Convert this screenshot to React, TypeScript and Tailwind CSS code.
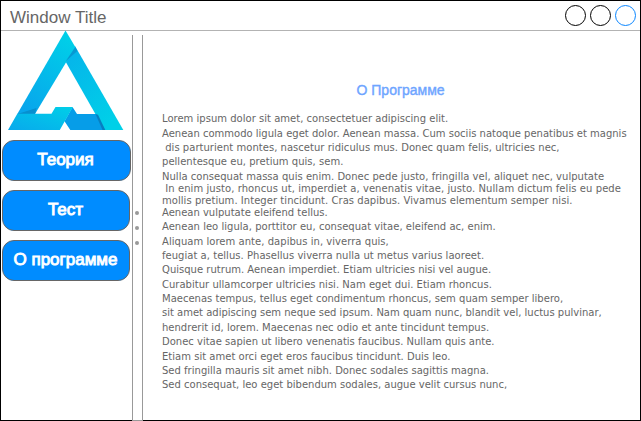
const lines: { text: string; row: string }[] = [
  { text: 'Lorem ipsum dolor sit amet, consectetuer adipiscing elit.', row: 'h-[15px] tracking-[0.015px]' },
  { text: 'Aenean commodo ligula eget dolor. Aenean massa. Cum sociis natoque penatibus et magnis', row: 'h-[15px]' },
  { text: '\u00a0dis parturient montes, nascetur ridiculus mus. Donec quam felis, ultricies nec,', row: 'h-[14px] tracking-[0.03px]' },
  { text: 'pellentesque eu, pretium quis, sem.', row: 'h-[14px] tracking-[0.03px]' },
  { text: 'Nulla consequat massa quis enim. Donec pede justo, fringilla vel, aliquet nec, vulputate', row: 'h-[15px] tracking-[0.02px]' },
  { text: '\u00a0In enim justo, rhoncus ut, imperdiet a, venenatis vitae, justo. Nullam dictum felis eu pede', row: 'h-[12px] tracking-[0.072px]' },
  { text: 'mollis pretium. Integer tincidunt. Cras dapibus. Vivamus elementum semper nisi.', row: 'h-[12px] tracking-[0.045px]' },
  { text: 'Aenean vulputate eleifend tellus.', row: 'h-[12px]' },
  { text: 'Aenean leo ligula, porttitor eu, consequat vitae, eleifend ac, enim.', row: 'h-[14px] tracking-[0.025px]' },
  { text: 'Aliquam lorem ante, dapibus in, viverra quis,', row: 'h-[15px] tracking-[0.04px]' },
  { text: 'feugiat a, tellus. Phasellus viverra nulla ut metus varius laoreet.', row: 'h-[14px] tracking-[0.03px]' },
  { text: 'Quisque rutrum. Aenean imperdiet. Etiam ultricies nisi vel augue.', row: 'h-[14px] tracking-[0.015px]' },
  { text: 'Curabitur ullamcorper ultricies nisi. Nam eget dui. Etiam rhoncus.', row: 'h-[15px] tracking-[0.015px]' },
  { text: 'Maecenas tempus, tellus eget condimentum rhoncus, sem quam semper libero,', row: 'h-[14px] tracking-[0.01px]' },
  { text: 'sit amet adipiscing sem neque sed ipsum. Nam quam nunc, blandit vel, luctus pulvinar,', row: 'h-[14px]' },
  { text: 'hendrerit id, lorem. Maecenas nec odio et ante tincidunt tempus.', row: 'h-[15px] tracking-[0.015px]' },
  { text: 'Donec vitae sapien ut libero venenatis faucibus. Nullam quis ante.', row: 'h-[14px]' },
  { text: 'Etiam sit amet orci eget eros faucibus tincidunt. Duis leo.', row: 'h-[15px] tracking-[0.02px]' },
  { text: 'Sed fringilla mauris sit amet nibh. Donec sodales sagittis magna.', row: 'h-[14px] tracking-[0.015px]' },
  { text: 'Sed consequat, leo eget bibendum sodales, augue velit cursus nunc,', row: 'h-[14px]' },
];

function Logo() {
  return (
    <svg className="-mt-px ml-[6px] block h-[100px] w-[117px]" viewBox="0 0 117 100">
      <defs>
        <linearGradient id="left" x1="0.7" y1="0" x2="0.2" y2="1">
          <stop offset="0" stopColor="#00cfe8" />
          <stop offset="1" stopColor="#08a5ec" />
        </linearGradient>
        <linearGradient id="right" x1="0" y1="0" x2="0.7" y2="1">
          <stop offset="0" stopColor="#06b2ea" />
          <stop offset="1" stopColor="#00d0e8" />
        </linearGradient>
        <linearGradient id="base" x1="0" y1="1" x2="1" y2="0">
          <stop offset="0" stopColor="#08a9ec" />
          <stop offset="1" stopColor="#00cfe8" />
        </linearGradient>
      </defs>
      <path d="M68 16 L116.3 100 L97.5 100 L58.5 31.5 L60 25 Z" fill="url(#right)" />
      <path d="M58.5 0.5 L68.3 17 L28 84 L10.3 84 Z" fill="url(#left)" />
      <path d="M68.3 17 L70.3 21 L58.5 31.5 Z" fill="#0699d2" />
      <path d="M10.5 84 L29.5 78 L27.8 84.5 Z" fill="#078fcf" />
      <path d="M65.5 77 L70 84 L89 84 L98 100 L63.3 100 L57.5 91.3 Z" fill="#069de8" />
      <path d="M88.5 84 L91 84.8 L98.3 100 L95.5 100 Z" fill="#087fc0" />
      <path d="M10.3 83.8 L44.5 83.8 L48.5 77 L65.8 77 L52.8 100 L1 100 Z" fill="url(#base)" />
    </svg>
  );
}

function MenuButton({ label, wide = false }: { label: string; wide?: boolean }) {
  return (
    <button
      className={`ml-px flex h-[41px] items-center justify-center rounded-[12px] border border-[#666] bg-[#008cff] pb-px font-['Liberation_Sans',sans-serif] text-[17px] leading-5 font-normal text-white [-webkit-text-stroke:0.9px_white] ${wide ? 'w-[129px] pr-[2px]' : 'w-[128px] pr-px'}`}
    >
      {label}
    </button>
  );
}

export default function App() {
  return (
    <div className="flex h-[421px] w-[641px] flex-col border border-black bg-white font-['Liberation_Sans',sans-serif]">
      <header className="flex h-[30px] shrink-0 items-center justify-between border-b border-[#b3b3b3] pr-1 pl-[9px]">
        <h1 className="pt-1 text-[17px] leading-5 text-[#666]">Window Title</h1>
        <div className="flex gap-1">
          <span className="size-[21px] rounded-full border border-black" />
          <span className="size-[21px] rounded-full border border-black" />
          <span className="size-[21px] rounded-full border border-[#0a86ff]" />
        </div>
      </header>
      <div className="flex min-h-0 flex-1">
        <aside className="w-[131px] shrink-0">
          <Logo />
          <nav className="mt-[10px] flex flex-col gap-[9px]">
            <MenuButton label="Теория" wide />
            <MenuButton label="Тест" />
            <MenuButton label="О программе" />
          </nav>
        </aside>
        <div className="mt-1 -mb-px flex w-[11px] shrink-0 flex-col items-center border-x border-b border-[#999] pt-[176px] pr-px">
          <div className="flex flex-col gap-[11px]">
            <span className="size-1 rounded-full bg-[#999]" />
            <span className="size-1 rounded-full bg-[#999]" />
            <span className="size-1 rounded-full bg-[#999]" />
          </div>
        </div>
        <main className="flex-1 pt-[49px] pl-[19px]">
          <h2 className="ml-[194.5px] w-max text-[14px] leading-5 text-[#6ea5ff] [-webkit-text-stroke:0.4px_#6ea5ff]">О Программе</h2>
          <div className="mt-[10px] font-['DejaVu_Sans',sans-serif] text-[10px] leading-3 text-[#666]">
            {lines.map(({ text, row }) => (
              <p key={text} className={`flex items-end whitespace-nowrap ${row}`}>
                {text}
              </p>
            ))}
          </div>
        </main>
      </div>
    </div>
  );
}
